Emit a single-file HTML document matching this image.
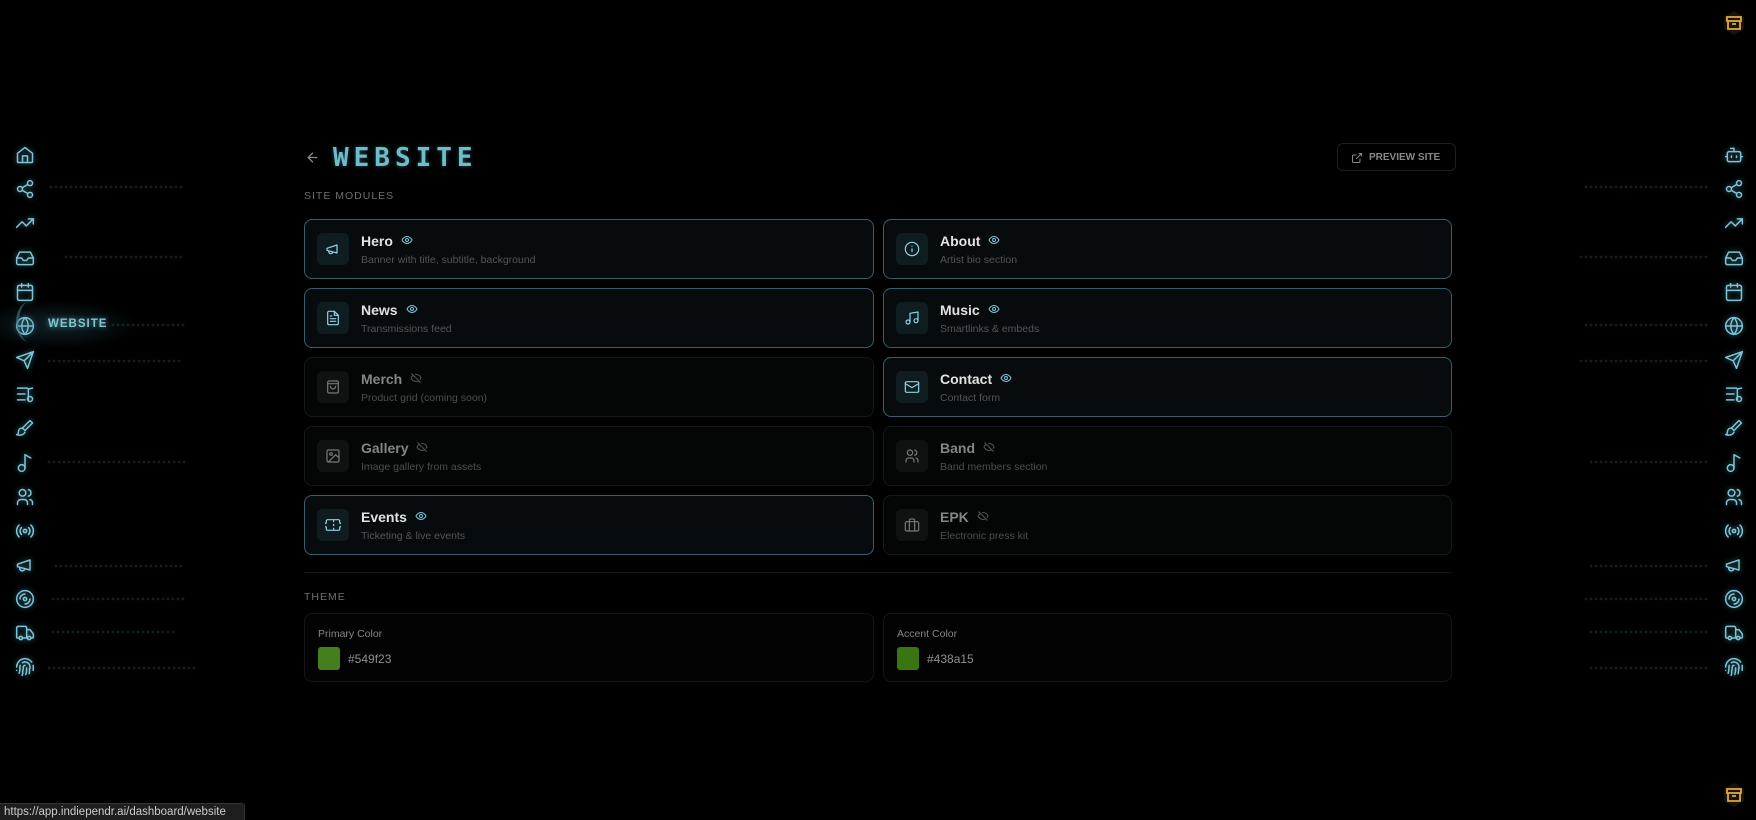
<!DOCTYPE html>
<html><head><meta charset="utf-8"><style>
*{box-sizing:border-box;margin:0;padding:0}
body{width:1756px;height:820px;background:#000;font-family:"Liberation Sans",sans-serif;position:relative;overflow:hidden;color:#ddd}
.ic{position:absolute;width:20px;height:20px;fill:none;stroke:#7fc4d4;stroke-width:1.8;stroke-linecap:round;stroke-linejoin:round;filter:drop-shadow(0 0 3px rgba(90,190,220,.6))}
.dust{position:absolute;height:2px;background:repeating-linear-gradient(90deg,rgba(120,200,210,.25) 0 2px,transparent 2px 5px);filter:blur(.4px)}
.card{position:absolute;height:60px;border-radius:8px;border:1px solid #35606a;background:#070b0d}
.card.off{border-color:#161919;background:#040505}
.card .box{position:absolute;left:12px;top:13px;width:32px;height:32px;border-radius:6px;background:#0f1d21}
.card.off .box{background:#101212}
.card .box svg{position:absolute;left:8px;top:8px;width:16px;height:16px;fill:none;stroke:#8fd3e3;stroke-width:1.8;stroke-linecap:round;stroke-linejoin:round}
.card.off .box svg{stroke:#777}
.card .t{position:absolute;left:56px;top:13px;font-size:14px;font-weight:bold;color:#e2e2e2}
.card.off .t{color:#858585}
.card .t svg{width:12px;height:12px;margin-left:8px;vertical-align:0;fill:none;stroke:#7fc4d4;stroke-width:2}
.card.off .t svg{stroke:#555}
.card .s{position:absolute;left:56px;top:34px;font-size:10.5px;color:#555}
.card.off .s{color:#4e4e4e}
.lbl{position:absolute;left:304px;font-size:10.5px;letter-spacing:1px;color:#6e6e6e}
.tc{position:absolute;top:613px;height:69px;border:1px solid #141616;border-radius:8px;background:#030303}
.tc .l{position:absolute;left:13px;top:14px;font-size:10.5px;color:#858585}
.tc .sw{position:absolute;left:13px;top:33px;width:22px;height:23px;border-radius:3px}
.tc .h{position:absolute;left:43px;top:38px;font-size:12px;color:#909090}
</style></head><body>

<!-- left sidebar -->
<svg class="ic" style="left:15px;top:145px" viewBox="0 0 24 24"><path d="M3 10l9-7 9 7v10a1 1 0 0 1-1 1H4a1 1 0 0 1-1-1z"/><path d="M9 21v-8h6v8"/></svg>
<svg class="ic" style="left:15px;top:179px" viewBox="0 0 24 24"><circle cx="18" cy="5" r="3"/><circle cx="6" cy="12" r="3"/><circle cx="18" cy="19" r="3"/><path d="M8.6 13.5l6.8 4M15.4 6.5l-6.8 4"/></svg>
<svg class="ic" style="left:15px;top:213px" viewBox="0 0 24 24"><path d="M22 7l-8.5 8.5-5-5L2 17"/><path d="M16 7h6v6"/></svg>
<svg class="ic" style="left:15px;top:248px" viewBox="0 0 24 24"><path d="M22 12h-6l-2 3h-4l-2-3H2"/><path d="M5.5 5h13L22 12v6a2 2 0 0 1-2 2H4a2 2 0 0 1-2-2v-6z"/></svg>
<svg class="ic" style="left:15px;top:282px" viewBox="0 0 24 24"><rect x="3" y="4" width="18" height="18" rx="2"/><path d="M16 2v4M8 2v4M3 10h18"/></svg>
<svg class="ic" style="left:15px;top:316px" viewBox="0 0 24 24"><circle cx="12" cy="12" r="10"/><path d="M2 12h20M12 2a15 15 0 0 1 0 20M12 2a15 15 0 0 0 0 20"/></svg>
<svg class="ic" style="left:15px;top:350px" viewBox="0 0 24 24"><path d="M22 2L11 13M22 2l-7 20-4-9-9-4z"/></svg>
<svg class="ic" style="left:15px;top:384px" viewBox="0 0 24 24"><path d="M3 5h12M3 12h9M3 19h9M16 19V6l5-1"/><circle cx="18" cy="18" r="3"/></svg>
<svg class="ic" style="left:15px;top:418px" viewBox="0 0 24 24"><path d="M18 3l3 3-9 9-3-3z"/><path d="M9 12c-3 0-5 2-5 5 0 2-1 3-2 3 3 1 8 1 10-3"/></svg>
<svg class="ic" style="left:15px;top:453px" viewBox="0 0 24 24"><circle cx="8" cy="18" r="4"/><path d="M12 18V2l7 4"/></svg>
<svg class="ic" style="left:15px;top:487px" viewBox="0 0 24 24"><circle cx="9" cy="7" r="4"/><path d="M3 21v-2a4 4 0 0 1 4-4h4a4 4 0 0 1 4 4v2M16 3.1a4 4 0 0 1 0 7.8M21 21v-2a4 4 0 0 0-3-3.9"/></svg>
<svg class="ic" style="left:15px;top:521px" viewBox="0 0 24 24"><circle cx="12" cy="12" r="2"/><path d="M16.2 7.8a6 6 0 0 1 0 8.4M7.8 16.2a6 6 0 0 1 0-8.4M19.1 4.9a10 10 0 0 1 0 14.2M4.9 19.1a10 10 0 0 1 0-14.2"/></svg>
<svg class="ic" style="left:15px;top:555px" viewBox="0 0 24 24"><path d="M3 11l15-5v12L3 14z"/><path d="M11.6 16.8a3 3 0 1 1-5.8-1.6"/></svg>
<svg class="ic" style="left:15px;top:589px" viewBox="0 0 24 24"><circle cx="12" cy="12" r="10"/><circle cx="12" cy="12" r="2"/><path d="M6 12a6 6 0 0 1 6-6M18 12a6 6 0 0 1-6 6"/></svg>
<svg class="ic" style="left:15px;top:623px" viewBox="0 0 24 24"><path d="M14 18V6a2 2 0 0 0-2-2H4a2 2 0 0 0-2 2v11a1 1 0 0 0 1 1h2M15 18H9M19 18h2a1 1 0 0 0 1-1v-3.6a1 1 0 0 0-.2-.6l-3.5-4.4A1 1 0 0 0 17.5 8H14"/><circle cx="17" cy="18" r="2"/><circle cx="7" cy="18" r="2"/></svg>
<svg class="ic" style="left:15px;top:657px" viewBox="0 0 24 24"><path d="M12 10a2 2 0 0 0-2 2c0 1 0 3-1 6M14 13c0 2 0 4-1 8M17 20c.4-2 .5-4 .5-6M2 12a10 10 0 0 1 18-6M2 16h.01M21.8 16c.2-2 .1-5 0-6M5 19.5C5.5 18 6 15 6 12a6 6 0 0 1 .3-2M8.6 22c.2-1 .6-2 .8-3M9 6.8a6 6 0 0 1 9 5.2v2"/></svg>

<div style="position:absolute;left:16px;top:302px;width:26px;height:40px;border-left:3px solid #4a7a8a;border-radius:50%;opacity:.6"></div>
<div style="position:absolute;left:0;top:300px;width:140px;height:50px;background:radial-gradient(ellipse at 40% 50%,rgba(60,130,150,.25),transparent 70%)"></div>
<div style="position:absolute;left:48px;top:318px;font-size:11.5px;font-weight:bold;letter-spacing:1px;color:#86c4d0;text-shadow:0 0 6px rgba(100,200,220,.7)">WEBSITE</div>

<div class="dust" style="left:50px;top:186px;width:135px"></div>
<div class="dust" style="left:65px;top:256px;width:120px"></div>
<div class="dust" style="left:112px;top:324px;width:73px"></div>
<div class="dust" style="left:48px;top:360px;width:135px"></div>
<div class="dust" style="left:48px;top:461px;width:140px"></div>
<div class="dust" style="left:55px;top:565px;width:130px"></div>
<div class="dust" style="left:52px;top:598px;width:135px"></div>
<div class="dust" style="left:52px;top:631px;width:125px"></div>
<div class="dust" style="left:48px;top:667px;width:150px"></div>

<!-- right sidebar -->
<svg class="ic" style="left:1724px;top:145px" viewBox="0 0 24 24"><rect x="4" y="8" width="16" height="12" rx="2"/><path d="M12 8V4H8M2 14h2M20 14h2M15 13v2M9 13v2"/></svg>
<svg class="ic" style="left:1724px;top:179px" viewBox="0 0 24 24"><circle cx="18" cy="5" r="3"/><circle cx="6" cy="12" r="3"/><circle cx="18" cy="19" r="3"/><path d="M8.6 13.5l6.8 4M15.4 6.5l-6.8 4"/></svg>
<svg class="ic" style="left:1724px;top:213px" viewBox="0 0 24 24"><path d="M22 7l-8.5 8.5-5-5L2 17"/><path d="M16 7h6v6"/></svg>
<svg class="ic" style="left:1724px;top:248px" viewBox="0 0 24 24"><path d="M22 12h-6l-2 3h-4l-2-3H2"/><path d="M5.5 5h13L22 12v6a2 2 0 0 1-2 2H4a2 2 0 0 1-2-2v-6z"/></svg>
<svg class="ic" style="left:1724px;top:282px" viewBox="0 0 24 24"><rect x="3" y="4" width="18" height="18" rx="2"/><path d="M16 2v4M8 2v4M3 10h18"/></svg>
<svg class="ic" style="left:1724px;top:316px" viewBox="0 0 24 24"><circle cx="12" cy="12" r="10"/><path d="M2 12h20M12 2a15 15 0 0 1 0 20M12 2a15 15 0 0 0 0 20"/></svg>
<svg class="ic" style="left:1724px;top:350px" viewBox="0 0 24 24"><path d="M22 2L11 13M22 2l-7 20-4-9-9-4z"/></svg>
<svg class="ic" style="left:1724px;top:384px" viewBox="0 0 24 24"><path d="M3 5h12M3 12h9M3 19h9M16 19V6l5-1"/><circle cx="18" cy="18" r="3"/></svg>
<svg class="ic" style="left:1724px;top:418px" viewBox="0 0 24 24"><path d="M18 3l3 3-9 9-3-3z"/><path d="M9 12c-3 0-5 2-5 5 0 2-1 3-2 3 3 1 8 1 10-3"/></svg>
<svg class="ic" style="left:1724px;top:453px" viewBox="0 0 24 24"><circle cx="8" cy="18" r="4"/><path d="M12 18V2l7 4"/></svg>
<svg class="ic" style="left:1724px;top:487px" viewBox="0 0 24 24"><circle cx="9" cy="7" r="4"/><path d="M3 21v-2a4 4 0 0 1 4-4h4a4 4 0 0 1 4 4v2M16 3.1a4 4 0 0 1 0 7.8M21 21v-2a4 4 0 0 0-3-3.9"/></svg>
<svg class="ic" style="left:1724px;top:521px" viewBox="0 0 24 24"><circle cx="12" cy="12" r="2"/><path d="M16.2 7.8a6 6 0 0 1 0 8.4M7.8 16.2a6 6 0 0 1 0-8.4M19.1 4.9a10 10 0 0 1 0 14.2M4.9 19.1a10 10 0 0 1 0-14.2"/></svg>
<svg class="ic" style="left:1724px;top:555px" viewBox="0 0 24 24"><path d="M3 11l15-5v12L3 14z"/><path d="M11.6 16.8a3 3 0 1 1-5.8-1.6"/></svg>
<svg class="ic" style="left:1724px;top:589px" viewBox="0 0 24 24"><circle cx="12" cy="12" r="10"/><circle cx="12" cy="12" r="2"/><path d="M6 12a6 6 0 0 1 6-6M18 12a6 6 0 0 1-6 6"/></svg>
<svg class="ic" style="left:1724px;top:623px" viewBox="0 0 24 24"><path d="M14 18V6a2 2 0 0 0-2-2H4a2 2 0 0 0-2 2v11a1 1 0 0 0 1 1h2M15 18H9M19 18h2a1 1 0 0 0 1-1v-3.6a1 1 0 0 0-.2-.6l-3.5-4.4A1 1 0 0 0 17.5 8H14"/><circle cx="17" cy="18" r="2"/><circle cx="7" cy="18" r="2"/></svg>
<svg class="ic" style="left:1724px;top:657px" viewBox="0 0 24 24"><path d="M12 10a2 2 0 0 0-2 2c0 1 0 3-1 6M14 13c0 2 0 4-1 8M17 20c.4-2 .5-4 .5-6M2 12a10 10 0 0 1 18-6M2 16h.01M21.8 16c.2-2 .1-5 0-6M5 19.5C5.5 18 6 15 6 12a6 6 0 0 1 .3-2M8.6 22c.2-1 .6-2 .8-3M9 6.8a6 6 0 0 1 9 5.2v2"/></svg>

<div class="dust" style="left:1585px;top:186px;width:125px"></div>
<div class="dust" style="left:1580px;top:256px;width:130px"></div>
<div class="dust" style="left:1585px;top:324px;width:125px"></div>
<div class="dust" style="left:1580px;top:360px;width:130px"></div>
<div class="dust" style="left:1590px;top:461px;width:120px"></div>
<div class="dust" style="left:1590px;top:565px;width:120px"></div>
<div class="dust" style="left:1585px;top:598px;width:125px"></div>
<div class="dust" style="left:1590px;top:631px;width:120px"></div>
<div class="dust" style="left:1590px;top:667px;width:120px"></div>

<!-- archive icons -->
<svg style="position:absolute;left:1722px;top:10px;width:24px;height:26px" viewBox="0 0 24 26"><path d="M12 1l10 6v12l-10 6-10-6V7z" fill="#1a1408"/><g fill="none" stroke="#e0a83a" stroke-width="1.8"><rect x="5" y="7" width="14" height="4"/><path d="M6 11v8h12v-8M10 14h4"/></g></svg>
<svg style="position:absolute;left:1722px;top:782px;width:24px;height:26px" viewBox="0 0 24 26"><path d="M12 1l10 6v12l-10 6-10-6V7z" fill="#1a1408"/><g fill="none" stroke="#e0a83a" stroke-width="1.8"><rect x="5" y="7" width="14" height="4"/><path d="M6 11v8h12v-8M10 14h4"/></g></svg>

<!-- header -->
<svg style="position:absolute;left:305px;top:150px;width:15px;height:15px" viewBox="0 0 24 24" fill="none" stroke="#888" stroke-width="2" stroke-linecap="round"><path d="M19 12H5M12 19l-7-7 7-7"/></svg>
<div style="position:absolute;left:333px;top:143px;font-family:'DejaVu Sans Mono',monospace;font-weight:bold;font-size:26px;letter-spacing:5px;color:#6fbccb;text-shadow:0 0 4px rgba(100,200,220,.4)">WEBSITE</div>
<div style="position:absolute;left:1337px;top:143px;width:119px;height:28px;border:1px solid #1d1f20;border-radius:6px;font-size:10px;font-weight:bold;color:#888">
<svg style="position:absolute;left:13px;top:8px;width:12px;height:12px" viewBox="0 0 24 24" fill="none" stroke="#888" stroke-width="2"><path d="M18 13v6a2 2 0 0 1-2 2H5a2 2 0 0 1-2-2V8a2 2 0 0 1 2-2h6M15 3h6v6M10 14L21 3"/></svg>
<span style="position:absolute;left:31px;top:8px">PREVIEW SITE</span></div>

<div class="lbl" style="top:190px">SITE MODULES</div>

<!-- cards -->
<div class="card" style="left:304px;top:219px;width:570px"><div class="box"><svg viewBox="0 0 24 24"><path d="M3 11l15-5v12L3 14z"/><path d="M11.6 16.8a3 3 0 1 1-5.8-1.6"/></svg></div><div class="t">Hero<svg viewBox="0 0 24 24"><path d="M2 12s3.5-7 10-7 10 7 10 7-3.5 7-10 7S2 12 2 12z"/><circle cx="12" cy="12" r="3"/></svg></div><div class="s">Banner with title, subtitle, background</div></div>
<div class="card" style="left:883px;top:219px;width:569px"><div class="box"><svg viewBox="0 0 24 24"><circle cx="12" cy="12" r="10"/><path d="M12 16v-4M12 8h.01"/></svg></div><div class="t">About<svg viewBox="0 0 24 24"><path d="M2 12s3.5-7 10-7 10 7 10 7-3.5 7-10 7S2 12 2 12z"/><circle cx="12" cy="12" r="3"/></svg></div><div class="s">Artist bio section</div></div>

<div class="card" style="left:304px;top:288px;width:570px"><div class="box"><svg viewBox="0 0 24 24"><path d="M14 2H6a2 2 0 0 0-2 2v16a2 2 0 0 0 2 2h12a2 2 0 0 0 2-2V8z"/><path d="M14 2v6h6M16 13H8M16 17H8M10 9H8"/></svg></div><div class="t">News<svg viewBox="0 0 24 24"><path d="M2 12s3.5-7 10-7 10 7 10 7-3.5 7-10 7S2 12 2 12z"/><circle cx="12" cy="12" r="3"/></svg></div><div class="s">Transmissions feed</div></div>
<div class="card" style="left:883px;top:288px;width:569px"><div class="box"><svg viewBox="0 0 24 24"><path d="M9 18V5l12-2v13"/><circle cx="6" cy="18" r="3"/><circle cx="18" cy="16" r="3"/></svg></div><div class="t">Music<svg viewBox="0 0 24 24"><path d="M2 12s3.5-7 10-7 10 7 10 7-3.5 7-10 7S2 12 2 12z"/><circle cx="12" cy="12" r="3"/></svg></div><div class="s">Smartlinks &amp; embeds</div></div>

<div class="card off" style="left:304px;top:357px;width:570px"><div class="box"><svg viewBox="0 0 24 24"><rect x="4" y="3" width="16" height="18" rx="2"/><path d="M4 7h16M16 11a4 4 0 0 1-8 0"/></svg></div><div class="t">Merch<svg viewBox="0 0 24 24"><path d="M3 3l18 18M10.6 5.1A10 10 0 0 1 22 12a13 13 0 0 1-2.3 3.2M6.6 6.6A13 13 0 0 0 2 12s3.5 7 10 7a9.7 9.7 0 0 0 5.4-1.6"/></svg></div><div class="s">Product grid (coming soon)</div></div>
<div class="card" style="left:883px;top:357px;width:569px"><div class="box"><svg viewBox="0 0 24 24"><rect x="2" y="4" width="20" height="16" rx="2"/><path d="M22 7l-10 6L2 7"/></svg></div><div class="t">Contact<svg viewBox="0 0 24 24"><path d="M2 12s3.5-7 10-7 10 7 10 7-3.5 7-10 7S2 12 2 12z"/><circle cx="12" cy="12" r="3"/></svg></div><div class="s">Contact form</div></div>

<div class="card off" style="left:304px;top:426px;width:570px"><div class="box"><svg viewBox="0 0 24 24"><rect x="3" y="3" width="18" height="18" rx="2"/><circle cx="9" cy="9" r="2"/><path d="M21 15l-5-5L5 21"/></svg></div><div class="t">Gallery<svg viewBox="0 0 24 24"><path d="M3 3l18 18M10.6 5.1A10 10 0 0 1 22 12a13 13 0 0 1-2.3 3.2M6.6 6.6A13 13 0 0 0 2 12s3.5 7 10 7a9.7 9.7 0 0 0 5.4-1.6"/></svg></div><div class="s">Image gallery from assets</div></div>
<div class="card off" style="left:883px;top:426px;width:569px"><div class="box"><svg viewBox="0 0 24 24"><circle cx="9" cy="7" r="4"/><path d="M3 21v-2a4 4 0 0 1 4-4h4a4 4 0 0 1 4 4v2M16 3.1a4 4 0 0 1 0 7.8M21 21v-2a4 4 0 0 0-3-3.9"/></svg></div><div class="t">Band<svg viewBox="0 0 24 24"><path d="M3 3l18 18M10.6 5.1A10 10 0 0 1 22 12a13 13 0 0 1-2.3 3.2M6.6 6.6A13 13 0 0 0 2 12s3.5 7 10 7a9.7 9.7 0 0 0 5.4-1.6"/></svg></div><div class="s">Band members section</div></div>

<div class="card" style="left:304px;top:495px;width:570px"><div class="box"><svg viewBox="0 0 24 24"><path d="M2 9a3 3 0 0 0 0 6v3a2 2 0 0 0 2 2h16a2 2 0 0 0 2-2v-3a3 3 0 0 0 0-6V6a2 2 0 0 0-2-2H4a2 2 0 0 0-2 2z"/><path d="M13 5v2M13 17v2M13 11v2"/></svg></div><div class="t">Events<svg viewBox="0 0 24 24"><path d="M2 12s3.5-7 10-7 10 7 10 7-3.5 7-10 7S2 12 2 12z"/><circle cx="12" cy="12" r="3"/></svg></div><div class="s">Ticketing &amp; live events</div></div>
<div class="card off" style="left:883px;top:495px;width:569px"><div class="box"><svg viewBox="0 0 24 24"><rect x="2" y="7" width="20" height="14" rx="2"/><path d="M16 21V5a2 2 0 0 0-2-2h-4a2 2 0 0 0-2 2v16"/></svg></div><div class="t">EPK<svg viewBox="0 0 24 24"><path d="M3 3l18 18M10.6 5.1A10 10 0 0 1 22 12a13 13 0 0 1-2.3 3.2M6.6 6.6A13 13 0 0 0 2 12s3.5 7 10 7a9.7 9.7 0 0 0 5.4-1.6"/></svg></div><div class="s">Electronic press kit</div></div>

<div style="position:absolute;left:304px;top:572px;width:1148px;height:1px;background:#151718"></div>
<div class="lbl" style="top:591px">THEME</div>

<div class="tc" style="left:304px;width:570px"><div class="l">Primary Color</div><div class="sw" style="background:#549f23;opacity:.8"></div><div class="h">#549f23</div></div>
<div class="tc" style="left:883px;width:569px"><div class="l">Accent Color</div><div class="sw" style="background:#438a15;opacity:.85"></div><div class="h">#438a15</div></div>

<div style="position:absolute;left:0;top:803px;height:17px;width:245px;background:#1e1e1e;border:1px solid #333;border-left:none;border-bottom:none;border-radius:0 3px 0 0;font-size:11.5px;color:#ccc;padding:2px 0 0 4px">https://app.indiependr.ai/dashboard/website</div>
</body></html>
